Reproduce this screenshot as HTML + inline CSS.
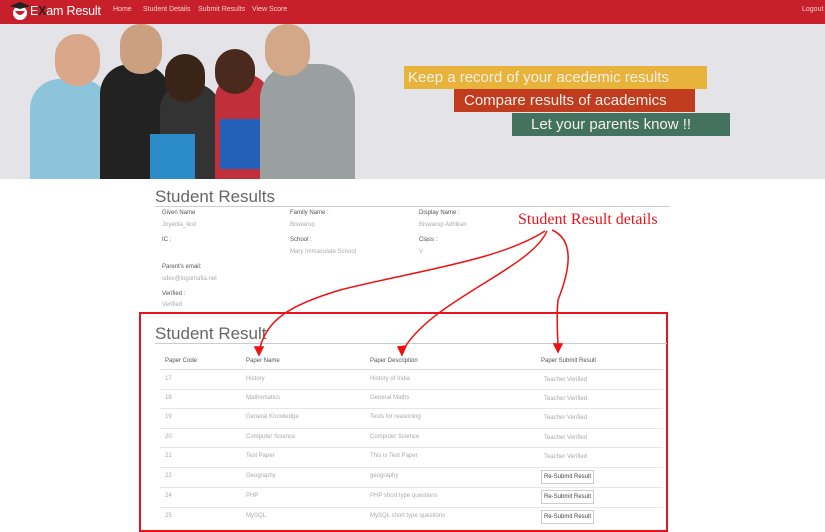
<!DOCTYPE html>
<html><head><style>
*{margin:0;padding:0;box-sizing:border-box}
body{width:825px;height:525px;overflow:hidden;background:#fff;font-family:"Liberation Sans",sans-serif;position:relative}
.nav{position:absolute;left:0;top:0;width:825px;height:24px;background:#c8202a}
.nav a{position:absolute;top:6px;color:#f3d0d0;font-size:7px}
.hero{position:absolute;left:0;top:24px;width:825px;height:155px;background:#e4e3e7;overflow:hidden}
.tag{position:absolute;color:#f4f0ea;font-size:15px;line-height:22px;padding-left:4px;padding-top:1px}
.abs{position:absolute}
h2{position:absolute;font-weight:normal;color:#666;font-size:17px}
.lbl{position:absolute;font-size:6px;color:#555}
.val{position:absolute;font-size:6px;color:#aaa}
.row{position:absolute;left:160px;width:503px;border-top:1px solid #e6e6e6;height:19.5px}
.c{position:absolute;font-size:6px;color:#aaa}
.btn{position:absolute;left:541px;font-size:6px;color:#444;border:1px solid #ccc;padding:3px 2px;background:#fff}
</style></head><body>
<div class="nav">
 <svg class="abs" style="left:6px;top:2px" width="30" height="20"><circle cx="14" cy="11" r="7" fill="#fff"/><path d="M9 9 Q14 17 19 9 Z" fill="#c8202a"/><path d="M4 4 L14 0 L24 4 L14 7Z" fill="#222"/></svg>
 <div class="abs" style="left:30px;top:4px;color:#fff;font-size:12.5px;letter-spacing:-0.2px">E<span style="color:#222;font-weight:bold">X</span>am Result</div>
 <a style="left:113px">Home</a><a style="left:143px">Student Details</a><a style="left:198px">Submit Results</a><a style="left:252px">View Score</a><a style="left:802px">Logout</a>
</div>
<div class="hero">
 <div class="abs" style="left:30px;top:55px;width:80px;height:100px;background:#8cc4dc;border-radius:30px 30px 0 0"></div>
 <div class="abs" style="left:55px;top:10px;width:45px;height:52px;background:#d9a88a;border-radius:22px"></div>
 <div class="abs" style="left:100px;top:40px;width:70px;height:115px;background:#222;border-radius:30px 30px 0 0"></div>
 <div class="abs" style="left:120px;top:0px;width:42px;height:50px;background:#caa080;border-radius:20px"></div>
 <div class="abs" style="left:160px;top:60px;width:60px;height:95px;background:#333;border-radius:25px 25px 0 0"></div>
 <div class="abs" style="left:165px;top:30px;width:40px;height:48px;background:#3a2418;border-radius:20px"></div>
 <div class="abs" style="left:150px;top:110px;width:45px;height:45px;background:#2b8ac8"></div>
 <div class="abs" style="left:215px;top:50px;width:55px;height:105px;background:#c0303a;border-radius:25px 25px 0 0"></div>
 <div class="abs" style="left:215px;top:25px;width:40px;height:45px;background:#4a2a1c;border-radius:20px"></div>
 <div class="abs" style="left:220px;top:95px;width:45px;height:50px;background:#2460b8"></div>
 <div class="abs" style="left:260px;top:40px;width:95px;height:115px;background:#9aa0a0;border-radius:35px 35px 0 0"></div>
 <div class="abs" style="left:265px;top:0px;width:45px;height:52px;background:#d2a888;border-radius:22px"></div>
 <div class="tag" style="left:404px;top:42px;width:303px;background:#e8b33a">Keep a record of your acedemic results</div>
 <div class="tag" style="left:454px;top:65px;width:241px;background:#c13c1e;padding-left:10px">Compare results of academics</div>
 <div class="tag" style="left:512px;top:89px;width:218px;background:#43735f;padding-left:19px">Let your parents know !!</div>
</div>
<h2 style="left:155px;top:187px">Student Results</h2>
<div class="abs" style="left:155px;top:206px;width:515px;border-top:1px solid #ccc"></div>
<div class="lbl" style="left:162px;top:210px">Given Name</div><div class="val" style="left:162px;top:222px">Joyenta_test</div>
<div class="lbl" style="left:290px;top:210px">Family Name :</div><div class="val" style="left:290px;top:222px">Biswarup</div>
<div class="lbl" style="left:419px;top:210px">Display Name :</div><div class="val" style="left:419px;top:222px">Biswarup Adhikari</div>
<div class="lbl" style="left:162px;top:237px">IC :</div>
<div class="lbl" style="left:290px;top:237px">School :</div><div class="val" style="left:290px;top:249px">Mary Immaculate School</div>
<div class="lbl" style="left:419px;top:237px">Class :</div><div class="val" style="left:419px;top:249px">V</div>
<div class="lbl" style="left:162px;top:264px">Parent's email:</div><div class="val" style="left:162px;top:276px">sdev@logomafia.net</div>
<div class="lbl" style="left:162px;top:291px">Verified :</div><div class="val" style="left:162px;top:302px">Verified</div>
<div class="abs" style="left:518px;top:211px;color:#e8141c;font-family:'Liberation Serif',serif;font-size:16px">Student Result details</div>
<div class="abs" style="left:139px;top:312px;width:529px;height:220px;border:2px solid #e8141c"></div>
<h2 style="left:155px;top:324px">Student Result</h2>
<div class="abs" style="left:155px;top:343px;width:512px;border-top:1px solid #ccc"></div>
<div class="c" style="left:165px;top:358px;color:#555">Paper Code</div>
<div class="c" style="left:246px;top:358px;color:#555">Paper Name</div>
<div class="c" style="left:370px;top:358px;color:#555">Paper Description</div>
<div class="c" style="left:541px;top:358px;color:#555">Paper Submit Result</div>
<div class="abs" style="left:160px;top:369px;width:503px;border-top:1px solid #ddd"></div>
<div class="c" style="left:165px;top:376px">17</div><div class="c" style="left:246px;top:376px">History</div><div class="c" style="left:370px;top:376px">History of India</div><div class="c" style="left:544px;top:377px">Teacher Verified</div>
<div class="row" style="top:389px"></div>
<div class="c" style="left:165px;top:395px">18</div><div class="c" style="left:246px;top:395px">Mathematics</div><div class="c" style="left:370px;top:395px">General Maths</div><div class="c" style="left:544px;top:396px">Teacher Verified</div>
<div class="row" style="top:408px"></div>
<div class="c" style="left:165px;top:414px">19</div><div class="c" style="left:246px;top:414px">General Knowledge</div><div class="c" style="left:370px;top:414px">Tests for reasoning</div><div class="c" style="left:544px;top:415px">Teacher Verified</div>
<div class="row" style="top:428px"></div>
<div class="c" style="left:165px;top:434px">20</div><div class="c" style="left:246px;top:434px">Computer Science</div><div class="c" style="left:370px;top:434px">Computer Science</div><div class="c" style="left:544px;top:435px">Teacher Verified</div>
<div class="row" style="top:447px"></div>
<div class="c" style="left:165px;top:453px">21</div><div class="c" style="left:246px;top:453px">Test Paper</div><div class="c" style="left:370px;top:453px">This is Test Paper</div><div class="c" style="left:544px;top:454px">Teacher Verified</div>
<div class="row" style="top:467px"></div>
<div class="c" style="left:165px;top:473px">22</div><div class="c" style="left:246px;top:473px">Geography</div><div class="c" style="left:370px;top:473px">geography</div><div class="btn" style="top:470px">Re-Submit Result</div>
<div class="row" style="top:487px"></div>
<div class="c" style="left:165px;top:493px">24</div><div class="c" style="left:246px;top:493px">PHP</div><div class="c" style="left:370px;top:493px">PHP short type questions</div><div class="btn" style="top:490px">Re-Submit Result</div>
<div class="row" style="top:507px"></div>
<div class="c" style="left:165px;top:513px">25</div><div class="c" style="left:246px;top:513px">MySQL</div><div class="c" style="left:370px;top:513px">MySQL short type questions</div><div class="btn" style="top:510px">Re-Submit Result</div>
<svg class="abs" style="left:0;top:0" width="825" height="525" fill="none" stroke="#f01010" stroke-width="1.5">
<path d="M545 231 C500 260 420 270 340 290 C290 305 265 320 259 352"/>
<path d="M547 231 C530 270 430 300 402 352"/>
<path d="M552 230 C575 240 570 270 558 300 C556 320 558 335 558 350"/>
<path d="M255 347 L259 355 L263 347Z M398 347 L402 355 L406 346Z M554 344 L558 352 L562 344Z" fill="#f01010"/>
</svg>
</body></html>
